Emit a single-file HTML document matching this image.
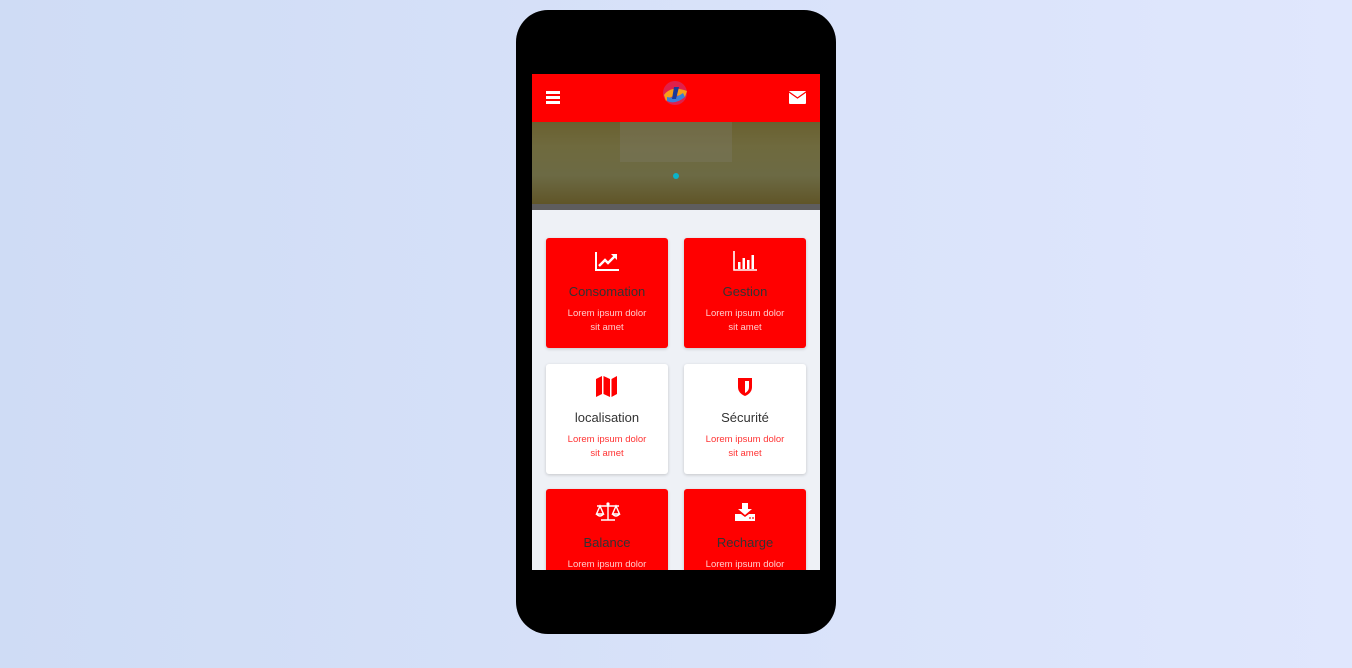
<!DOCTYPE html>
<html><head><meta charset="utf-8"><style>
*{margin:0;padding:0;box-sizing:border-box}
body{width:1352px;height:668px;overflow:hidden;background:linear-gradient(90deg,#cfdcf5,#e0e7fd);font-family:"Liberation Sans",sans-serif;position:relative}
.phone{position:absolute;left:516px;top:10px;width:320px;height:624px;background:#000;border-radius:32px}
.screen{position:absolute;left:532px;top:74px;width:288px;height:496px;background:#eef1f6;overflow:hidden}
.hdr{position:absolute;left:0;top:0;width:288px;height:48px;background:#f00}
.ban{position:absolute;left:0;top:48px;width:288px;height:82px;background:linear-gradient(180deg,#6a6030 0%,#6f6a3e 30%,#6c6a44 65%,#605528 100%)}
.ban .mid{position:absolute;left:88px;top:0;width:112px;height:40px;background:rgba(125,122,105,.35)}
.strip{position:absolute;left:0;top:130px;width:288px;height:6px;background:#5e5d5e}
.dot{position:absolute;left:141px;top:51px;width:6px;height:6px;border-radius:50%;background:#0ab3c9}
.card{position:absolute;width:122px;height:110px;border-radius:3px;background:#f00;box-shadow:0 1px 3px rgba(0,0,0,.18);text-align:center}
.card.w{background:#fff}
.card svg{position:absolute;left:49px;top:12px}
.t{position:absolute;left:0;right:0;top:46px;font-size:13px;color:#333}
.d{position:absolute;left:0;right:0;top:69px;font-size:9.5px;line-height:14px;color:#fcc}
.w .d{color:#f33}
</style></head><body>
<div class="phone"></div>
<div class="screen">
 <div class="hdr">
  <div style="position:absolute;left:14px;top:17px;width:14px;height:2.5px;background:#fff;box-shadow:0 5px 0 #fff,0 10px 0 #fff"></div>
  <svg style="position:absolute;left:129px;top:5px" width="28" height="28" viewBox="0 0 28 28"><circle cx="14" cy="14" r="12" fill="#e0204a"/><path d="M3 16 Q10 6 26 12 L24 18 Q12 14 5 22Z" fill="#f7a01a"/><path d="M6 22 Q14 26 24 18 L22 14 Q14 20 6 18Z" fill="#3b7fd8"/><path d="M13 8 L18 8 L15 20 L11 20Z" fill="#1a3a9a"/></svg>
  <svg style="position:absolute;left:257px;top:17px" width="17" height="13" viewBox="0 0 17 13"><rect width="17" height="13" rx="1" fill="#fff"/><path d="M0 1 L8.5 7 L17 1" stroke="#f00" stroke-width="1.3" fill="none"/></svg>
 </div>
 <div class="ban"><div class="mid"></div><div class="dot"></div></div>
 <div class="strip"></div>

 <div class="card" style="left:14px;top:164px"><svg width="24" height="22" viewBox="0 0 24 22"><path d="M1 2V20H24" stroke="#fff" stroke-width="2" fill="none"/><path d="M4 16L10 10L13 13L20 6" stroke="#fff" stroke-width="2.4" fill="none"/><path d="M16 4H22V10Z" fill="#fff"/></svg><div class="t">Consomation</div><div class="d">Lorem ipsum dolor<br>sit amet</div></div>
 <div class="card" style="left:152px;top:164px"><svg width="24" height="22" viewBox="0 0 24 22"><path d="M1 1V20H24" stroke="#fff" stroke-width="1.6" fill="none"/><rect x="5" y="12" width="2.5" height="7" fill="#fff"/><rect x="9.5" y="8" width="2.5" height="11" fill="#fff"/><rect x="14" y="10" width="2.5" height="9" fill="#fff"/><rect x="18.5" y="5" width="2.5" height="14" fill="#fff"/></svg><div class="t">Gestion</div><div class="d">Lorem ipsum dolor<br>sit amet</div></div>

 <div class="card w" style="left:14px;top:290px"><svg width="24" height="22" viewBox="0 0 24 22"><path d="M1 3L7 0V18L1 21Z M8.5 0L15 3V21L8.5 18Z M16.5 3L22 0V18L16.5 21Z" fill="#f00"/></svg><div class="t">localisation</div><div class="d">Lorem ipsum dolor<br>sit amet</div></div>
 <div class="card w" style="left:152px;top:290px"><svg width="24" height="22" viewBox="0 0 24 22"><path d="M5 2H19V11Q19 17 12 20Q5 17 5 11Z" fill="#f00"/><path d="M12 5H16V11Q16 15 12 17Z" fill="#fff"/></svg><div class="t">Sécurité</div><div class="d">Lorem ipsum dolor<br>sit amet</div></div>

 <div class="card" style="left:14px;top:415px"><svg width="26" height="22" viewBox="0 0 26 22"><g stroke="#fff" stroke-width="1.4" fill="none"><path d="M13 3V19M6 19H20M2 5H24"/><path d="M5 5L1.5 13H8.5Z M21 5L17.5 13H24.5Z"/><path d="M1.5 13Q5 17 8.5 13 M17.5 13Q21 17 24.5 13"/></g><circle cx="13" cy="3" r="1.6" fill="#fff"/></svg><div class="t">Balance</div><div class="d">Lorem ipsum dolor<br>sit amet</div></div>
 <div class="card" style="left:152px;top:415px"><svg width="24" height="22" viewBox="0 0 24 22"><path d="M9 2H15V8H19L12 14L5 8H9Z" fill="#fff"/><path d="M2 13H8L12 16L16 13H22V20H2Z" fill="#fff"/><circle cx="17" cy="17" r=".9" fill="#f00"/><circle cx="20" cy="17" r=".9" fill="#f00"/></svg><div class="t">Recharge</div><div class="d">Lorem ipsum dolor<br>sit amet</div></div>
</div>
</body></html>
